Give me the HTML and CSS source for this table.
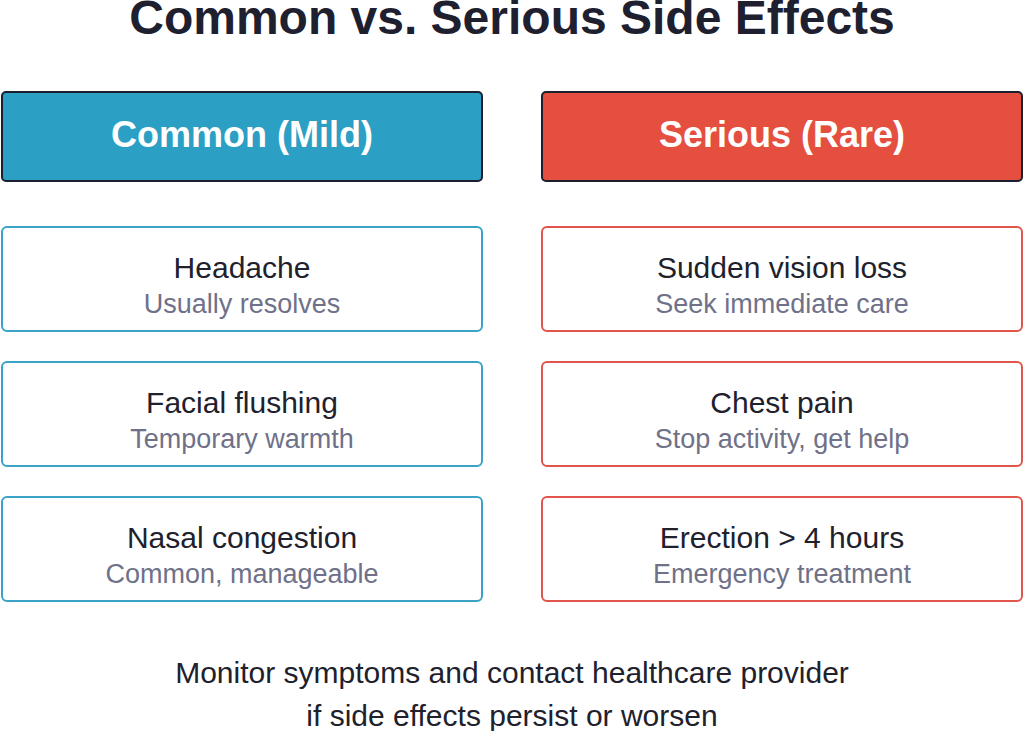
FILE: index.html
```html
<!DOCTYPE html>
<html lang="en">
<head>
<meta charset="utf-8">
<title>Common vs. Serious Side Effects</title>
<link rel="stylesheet" href="styles.css">
</head>
<body>
<div class="page">
  <h1 class="title">Common vs. Serious Side Effects</h1>
  <div class="columns">
    <section class="column column-mild">
      <div class="header">Common (Mild)</div>
      <div class="card">
        <div class="card-main">Headache</div>
        <div class="card-sub">Usually resolves</div>
      </div>
      <div class="card">
        <div class="card-main">Facial flushing</div>
        <div class="card-sub">Temporary warmth</div>
      </div>
      <div class="card">
        <div class="card-main">Nasal congestion</div>
        <div class="card-sub">Common, manageable</div>
      </div>
    </section>
    <section class="column column-serious">
      <div class="header">Serious (Rare)</div>
      <div class="card">
        <div class="card-main">Sudden vision loss</div>
        <div class="card-sub">Seek immediate care</div>
      </div>
      <div class="card">
        <div class="card-main">Chest pain</div>
        <div class="card-sub">Stop activity, get help</div>
      </div>
      <div class="card">
        <div class="card-main">Erection &gt; 4 hours</div>
        <div class="card-sub">Emergency treatment</div>
      </div>
    </section>
  </div>
  <p class="footer">Monitor symptoms and contact healthcare provider<br>if side effects persist or worsen</p>
</div>
</body>
</html>
```
FILE: styles.css
```css
* { box-sizing: border-box; }
html, body {
  margin: 0;
  padding: 0;
  background: #ffffff;
}
body {
  font-family: "Liberation Sans", Arial, sans-serif;
  width: 1024px;
  height: 731px;
  overflow: hidden;
}
.page {
  display: flex;
  flex-direction: column;
}
.title {
  margin: 0;
  font-size: 48px;
  line-height: 36px;
  font-weight: 700;
  color: #1e2030;
  text-align: center;
}
.columns {
  display: grid;
  grid-template-columns: 482px 482px;
  column-gap: 58px;
  padding: 0 1px;
  margin-top: 55px;
}
.column {
  display: flex;
  flex-direction: column;
  gap: 29px;
}
.header {
  height: 91px;
  border: 2.5px solid #1c1f2e;
  border-radius: 5px;
  display: flex;
  align-items: center;
  justify-content: center;
  color: #ffffff;
  font-size: 36px;
  font-weight: 700;
  padding-bottom: 3px;
  margin-bottom: 15px;
}
.column-mild .header { background: #2b9fc4; }
.column-serious .header { background: #e44f3f; }
.card {
  height: 106px;
  border: 2.5px solid #3aa3c6;
  border-radius: 6px;
  padding-top: 22px;
  text-align: center;
}
.column-serious .card { border-color: #e0564a; }
.card-main {
  font-size: 30px;
  line-height: 36px;
  color: #20212c;
}
.card-sub {
  font-size: 27px;
  line-height: 36px;
  color: #6f7189;
}
.footer {
  margin: 49px 0 0;
  font-size: 30px;
  line-height: 43px;
  color: #20212c;
  text-align: center;
}
```
